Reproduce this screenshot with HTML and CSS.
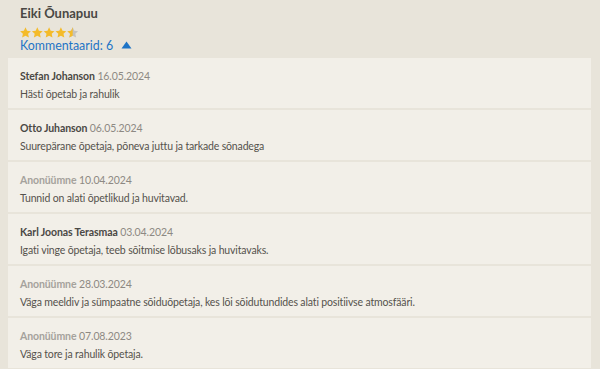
FILE: index.html
```html
<!DOCTYPE html>
<html lang="et">
<head>
    <meta charset="UTF-8">
    <title>Eiki Õunapuu - Kommentaarid</title>
    <link rel="stylesheet" href="styles.css">
</head>
<body>
    <div class="teacher">
        <h1 class="teacher-name">Eiki Õunapuu</h1>
        <div class="rating">
            <svg width="60" height="11" viewBox="0 0 60 11">
                <defs>
                    <path id="star" d="M5.5 0.3 L7.1 3.8 L10.9 4.2 L8.1 6.8 L8.9 10.6 L5.5 8.7 L2.1 10.6 L2.9 6.8 L0.1 4.2 L3.9 3.8 Z"/>
                    <clipPath id="half"><rect x="0" y="0" width="5.5" height="11"/></clipPath>
                </defs>
                <use href="#star" x="0" fill="#f4bb2a"/>
                <use href="#star" x="11.8" fill="#f4bb2a"/>
                <use href="#star" x="23.6" fill="#f4bb2a"/>
                <use href="#star" x="35.4" fill="#f4bb2a"/>
                <g transform="translate(47.2 0)">
                    <use href="#star" fill="#c4c2bd"/>
                    <use href="#star" fill="#f4bb2a" clip-path="url(#half)"/>
                </g>
            </svg>
        </div>
        <div class="comments-toggle">
            Kommentaarid: 6
            <svg class="arrow" width="11" height="8" viewBox="0 0 11 8"><path d="M5.5 0.5 L10.5 7.5 L0.5 7.5 Z" fill="#1f74c6"/></svg>
        </div>
    </div>

    <ul class="comments">
        <li class="comment">
            <div class="meta"><span class="author">Stefan Johanson</span> 16.05.2024</div>
            <p>Hästi õpetab ja rahulik</p>
        </li>
        <li class="comment">
            <div class="meta"><span class="author">Otto Juhanson</span> 06.05.2024</div>
            <p>Suurepärane õpetaja, põneva juttu ja tarkade sõnadega</p>
        </li>
        <li class="comment">
            <div class="meta"><span class="author anon">Anonüümne</span> 10.04.2024</div>
            <p>Tunnid on alati õpetlikud ja huvitavad.</p>
        </li>
        <li class="comment">
            <div class="meta"><span class="author">Karl Joonas Terasmaa</span> 03.04.2024</div>
            <p>Igati vinge õpetaja, teeb sõitmise lõbusaks ja huvitavaks.</p>
        </li>
        <li class="comment">
            <div class="meta"><span class="author anon">Anonüümne</span> 28.03.2024</div>
            <p>Väga meeldiv ja sümpaatne sõiduõpetaja, kes lõi sõidutundides alati positiivse atmosfääri.</p>
        </li>
        <li class="comment">
            <div class="meta"><span class="author anon">Anonüümne</span> 07.08.2023</div>
            <p>Väga tore ja rahulik õpetaja.</p>
        </li>
    </ul>
</body>
</html>
```
FILE: styles.css
```css
* { box-sizing: border-box; margin: 0; padding: 0; }
body {
    font-family: Lato, "Noto Sans", sans-serif;
    background: #e8e4da;
    color: #55524c;
    padding: 0 9px 0 8px;
}
.teacher {
    padding: 4px 12px 0;
    height: 58px;
}
.teacher-name {
    font-size: 13px;
    font-weight: 700;
    color: #4a4844;
    line-height: 18px;
}
.rating {
    height: 11px;
    margin-top: 5px;
    display: flex;
}
.comments-toggle {
    color: #1f74c6;
    font-size: 12.4px;
    line-height: 15px;
    display: flex;
    align-items: center;
    gap: 8px;
}
.arrow { margin-top: -1px; }
.comments { list-style: none; }
.comment {
    background: #f2efe8;
    height: 50px;
    margin-bottom: 2px;
    padding: 10px 12px 0;
}
.meta {
    font-size: 10.5px;
    line-height: 16px;
    letter-spacing: -0.1px;
    color: #8d8983;
}
.author {
    font-weight: 700;
    color: #4a4844;
}
.author.anon { color: #a5a29c; }
.comment p {
    font-size: 10.5px;
    line-height: 16px;
    letter-spacing: -0.15px;
    margin-top: 2px;
    color: #55524c;
}
```
